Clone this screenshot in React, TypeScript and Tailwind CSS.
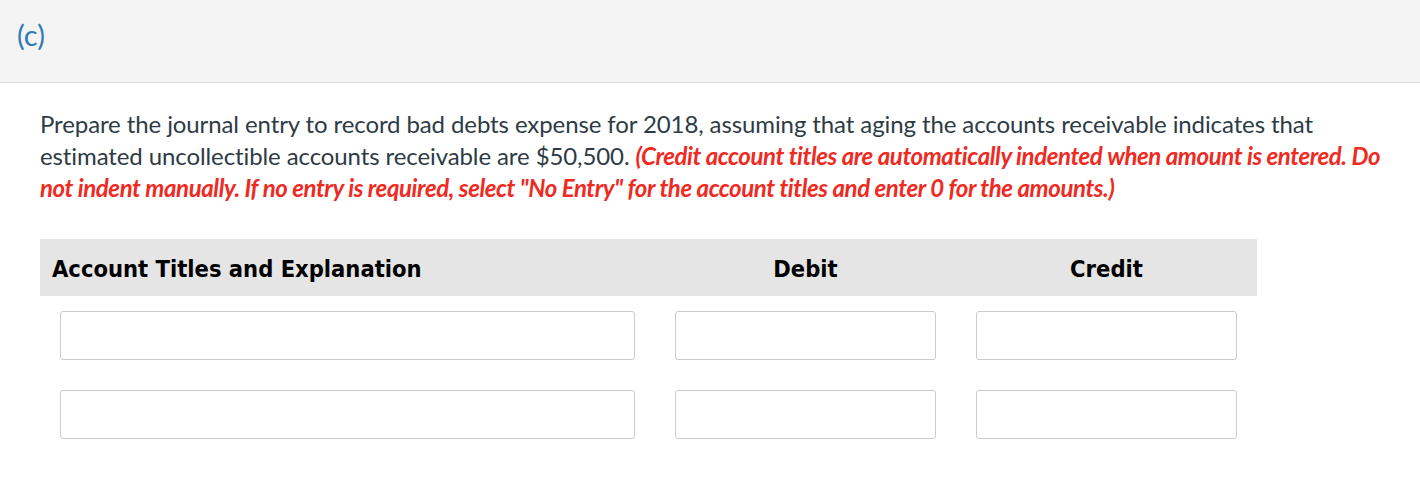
import React from "react";

export default function App() {
  const rows = [0, 1];
  return (
    <div className="w-[1420px] h-[488px] bg-white font-['Lato',sans-serif]">
      <div className="h-[83px] bg-[#f4f4f4] border-b border-[#dcdcdc] pl-[17px] pt-[15px]">
        <span className="text-[29px] leading-[40px] text-[#337ab7]">(c)</span>
      </div>
      <div className="pl-[40px] pr-[20px] pt-[25px]">
        <p className="text-[24px] leading-[32px] text-[#2d3b45] tracking-[-0.1px]">
          Prepare the journal entry to record bad debts expense for 2018, assuming that aging the accounts receivable indicates that
          <br />
          estimated uncollectible accounts receivable are $50,500.{" "}
          <span className="italic font-bold text-[#ee2a22] tracking-[-0.4px]">
            (Credit account titles are automatically indented when amount is entered. Do
            <br />
            not indent manually. If no entry is required, select "No Entry" for the account titles and enter 0 for the amounts.)
          </span>
        </p>
        <div className="mt-[35px] w-[1217px]">
          <div className="flex h-[57px] items-center pt-[4px] bg-[#e5e5e5] font-['DejaVu_Sans_Condensed','DejaVu_Sans',sans-serif] font-bold text-[23.5px] text-black">
            <div className="w-[615px] pl-[12px]">Account Titles and Explanation</div>
            <div className="w-[301px] text-center">Debit</div>
            <div className="w-[301px] text-center">Credit</div>
          </div>
          {rows.map((r) => (
            <div key={r} className="flex pt-[15px] pb-[15px]">
              <div className="w-[615px] pl-[20px] pr-[20px]">
                <div className="h-[49px] border border-[#cccccc] rounded-[3px] bg-white" />
              </div>
              <div className="w-[301px] pl-[20px] pr-[20px]">
                <div className="h-[49px] border border-[#cccccc] rounded-[3px] bg-white" />
              </div>
              <div className="w-[301px] pl-[20px] pr-[20px]">
                <div className="h-[49px] border border-[#cccccc] rounded-[3px] bg-white" />
              </div>
            </div>
          ))}
        </div>
      </div>
    </div>
  );
}
